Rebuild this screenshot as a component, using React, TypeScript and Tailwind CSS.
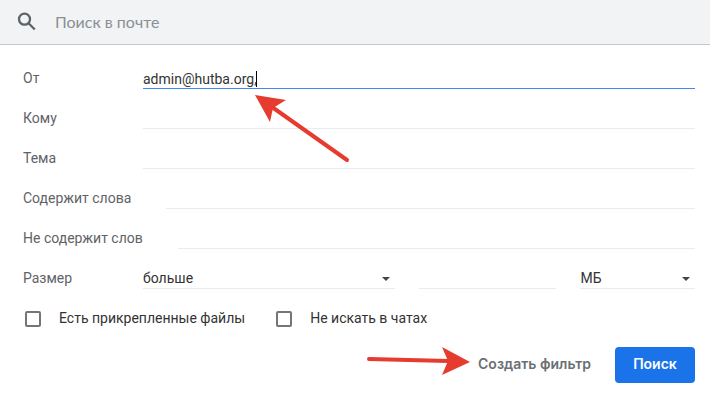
import clsx from 'clsx';

const fields = [
  { id: 'from', label: 'От', value: 'admin@hutba.org,', active: true },
  { id: 'to', label: 'Кому' },
  { id: 'subject', label: 'Тема' },
  { id: 'has', label: 'Содержит слова' },
  { id: 'hasnot', label: 'Не содержит слов' },
];

const checks = [
  { id: 'attachment', label: 'Есть прикрепленные файлы' },
  { id: 'chats', label: 'Не искать в чатах' },
];

function SelectField({ label, value }: { label: string; value: string }) {
  return (
    <div className="relative min-w-0">
      <select
        aria-label={label}
        className="block h-5 w-full appearance-none border-b border-[#ebebeb] bg-transparent pb-0.5 leading-4 outline-none"
      >
        <option>{value}</option>
      </select>
      <svg viewBox="0 0 8 4" className="pointer-events-none absolute right-[5px] top-2 h-1 w-2 fill-[#444]">
        <path d="M0 0h8L4 4z" />
      </svg>
    </div>
  );
}

export default function App() {
  return (
    <div className="bg-white font-['Roboto',sans-serif] text-sm text-[#333]">
      <header className="flex h-[45px] items-center gap-4 border-b border-[#c6c7c8] bg-[#f1f3f4] px-[15px]">
        <svg viewBox="0 0 24 24" className="size-6 fill-none stroke-[#5f6368]" strokeWidth="2.3">
          <circle cx="9.5" cy="9.2" r="5.5" />
          <path d="m13.6 13.3 6.2 6.2" />
        </svg>
        <input
          type="search"
          aria-label="Поиск в почте"
          placeholder="Поиск в почте"
          className="min-w-0 flex-1 bg-transparent font-['Lato',sans-serif] text-base outline-none placeholder:text-[#8b8f93]"
        />
      </header>

      <form className="pb-4 pl-[23px] pr-[15px] pt-1">
        {fields.map(({ id, label, value, active }) => (
          <div key={id} className="flex h-10 items-end">
            <label htmlFor={id} className="mr-[35px] min-w-[85px] pb-px leading-5 text-[#5f6368]">
              {label}
            </label>
            <div className="relative min-w-0 flex-1">
              <input
                id={id}
                defaultValue={value}
                className={clsx(
                  'block h-5 w-full border-b bg-transparent outline-none',
                  active ? 'border-[#4285f4]' : 'border-[#e8ecef]',
                )}
              />
              {active && (
                <>
                  <span className="absolute left-[113px] top-0.5 h-4 w-px bg-black" />
                  <svg
                    viewBox="0 0 96 70"
                    className="pointer-events-none absolute left-28 top-6 z-10 h-[70px] w-24"
                  >
                    <path d="M17 14 92 67" stroke="#e63c2f" strokeWidth="4" strokeLinecap="round" />
                    <path d="M0 2 31 7 18 15 15 29z" fill="#e63c2f" />
                  </svg>
                </>
              )}
            </div>
          </div>
        ))}

        <div className="flex h-10 items-end">
          <label htmlFor="size" className="mr-[35px] min-w-[85px] pb-px leading-5 text-[#5f6368]">
            Размер
          </label>
          <div className="grid flex-1 grid-cols-[11fr_6fr_5fr] gap-6">
            <SelectField label="Сравнение" value="больше" />
            <input
              id="size"
              className="h-5 w-full min-w-0 border-b border-[#ebebeb] bg-transparent outline-none"
            />
            <SelectField label="Единицы" value="МБ" />
          </div>
        </div>

        <div className="mt-[19px] flex gap-[31px] pl-0.5">
          {checks.map(({ id, label }) => (
            <label key={id} htmlFor={id} className="flex items-center gap-[18px] leading-5">
              <input
                id={id}
                type="checkbox"
                className="size-4 appearance-none rounded-xs border-2 border-[#757575] checked:bg-[#757575]"
              />
              <span className="pb-0.5">{label}</span>
            </label>
          ))}
        </div>

        <div className="mt-[17px] flex items-center justify-end gap-6 font-['Inter',sans-serif] font-semibold">
          <button type="button" className="relative h-9 pb-0.5 text-[#6b6f74]">
            Создать фильтр
            <svg
              viewBox="0 0 104 32"
              className="pointer-events-none absolute right-full top-0 mr-2 h-8 w-[104px]"
            >
              <path d="M3 12 82 14" stroke="#e63c2f" strokeWidth="4" strokeLinecap="round" />
              <path d="M104 15 76 0 82 14 76 28z" fill="#e63c2f" />
            </svg>
          </button>
          <button type="submit" className="h-9 w-20 rounded bg-[#1a73e8] pb-0.5 text-white">
            Поиск
          </button>
        </div>
      </form>
    </div>
  );
}
